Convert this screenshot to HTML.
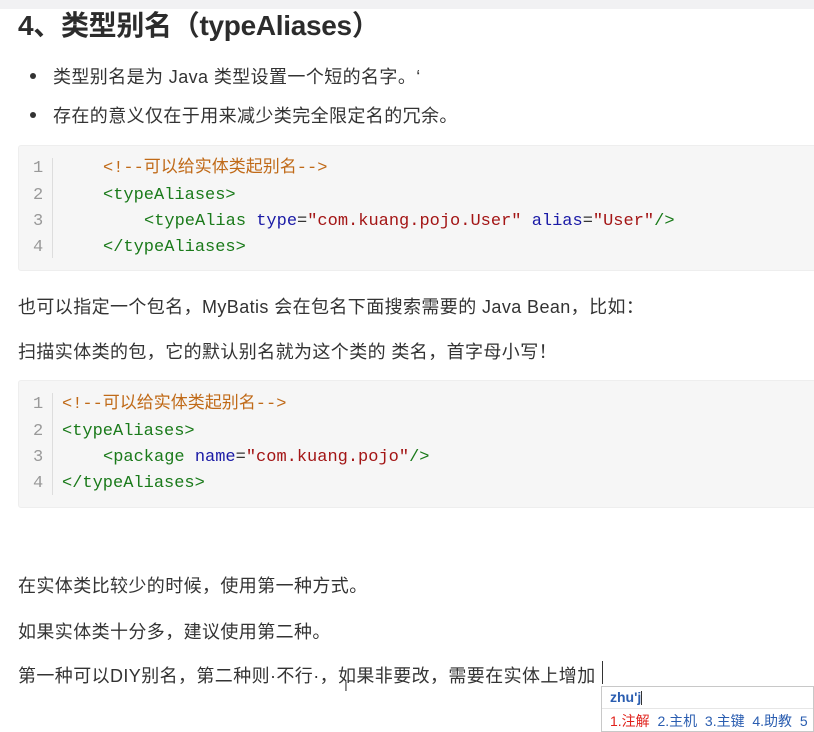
<!DOCTYPE html>
<html><head><meta charset="utf-8"><style>
*{margin:0;padding:0;box-sizing:border-box}
body{width:814px;height:732px;background:#fff;position:relative;overflow:hidden;font-family:"Liberation Sans","Noto Sans CJK SC",sans-serif;color:#333}
.top{position:absolute;left:0;top:0;width:814px;height:9px;background:#f1f1f3}
.abs{position:absolute;white-space:nowrap}
h1{position:absolute;left:18px;top:4px;font-size:28px;font-weight:bold;color:#2c2c2c;white-space:nowrap;letter-spacing:-0.3px}
.p{font-size:18px;letter-spacing:0.4px;color:#333}
.dot{position:absolute;width:6px;height:6px;border-radius:3px;background:#333}
.code{position:absolute;left:18px;width:800px;background:#f6f6f6;border:1px solid #eee;border-radius:3px}
.code .g{position:absolute;left:33px;top:12px;bottom:12px;width:1px;background:#ddd}
.ln{position:absolute;left:14px;font-family:"Liberation Mono",monospace;font-size:17px;line-height:20px;color:#999}
.cl{position:absolute;font-family:"Liberation Mono","Noto Sans CJK SC",monospace;font-size:17px;line-height:20px;white-space:pre;color:#1a7a1a}
.c{color:#c06a18}.a{color:#1a1aa6}.s{color:#a31515}.k{color:#333}
.ime{position:absolute;left:601px;top:686px;width:213px;height:46px;border:1px solid #c8c8c8;background:#fff;font-size:14px}
</style></head><body>
<div class="top"></div>
<h1>4、类型别名（typeAliases）</h1>
<div class="dot" style="left:30px;top:73px"></div>
<div class="abs p" style="left:53px;top:63px">类型别名是为 Java 类型设置一个短的名字。‘</div>
<div class="dot" style="left:30px;top:112px"></div>
<div class="abs p" style="left:53px;top:102px">存在的意义仅在于用来减少类完全限定名的冗余。</div>

<div class="code" style="top:145px;height:126px">
<div class="g"></div>
<div class="ln" style="top:13px">1</div><div class="ln" style="top:40px">2</div><div class="ln" style="top:66px">3</div><div class="ln" style="top:92px">4</div>
<div class="cl c" style="left:84px;top:13px">&lt;!--可以给实体类起别名--&gt;</div>
<div class="cl" style="left:84px;top:40px">&lt;typeAliases&gt;</div>
<div class="cl" style="left:125px;top:66px">&lt;typeAlias <span class="a">type</span><span class="k">=</span><span class="s">"com.kuang.pojo.User"</span> <span class="a">alias</span><span class="k">=</span><span class="s">"User"</span>/&gt;</div>
<div class="cl" style="left:84px;top:92px">&lt;/typeAliases&gt;</div>
</div>

<div class="abs p" style="left:18px;top:293px">也可以指定一个包名，MyBatis 会在包名下面搜索需要的 Java Bean，比如：</div>
<div class="abs p" style="left:18px;top:338px">扫描实体类的包，它的默认别名就为这个类的 类名，首字母小写！</div>

<div class="code" style="top:380px;height:128px">
<div class="g"></div>
<div class="ln" style="top:14px">1</div><div class="ln" style="top:41px">2</div><div class="ln" style="top:67px">3</div><div class="ln" style="top:93px">4</div>
<div class="cl c" style="left:43px;top:14px">&lt;!--可以给实体类起别名--&gt;</div>
<div class="cl" style="left:43px;top:41px">&lt;typeAliases&gt;</div>
<div class="cl" style="left:84px;top:67px">&lt;package <span class="a">name</span><span class="k">=</span><span class="s">"com.kuang.pojo"</span>/&gt;</div>
<div class="cl" style="left:43px;top:93px">&lt;/typeAliases&gt;</div>
</div>

<div class="abs p" style="left:18px;top:572px">在实体类比较少的时候，使用第一种方式。</div>
<div class="abs p" style="left:18px;top:618px">如果实体类十分多，建议使用第二种。</div>
<div class="abs p" style="left:18px;top:662px">第一种可以DIY别名，第二种则·不行·，如果非要改，需要在实体上增加</div>
<div class="abs" style="left:602px;top:661px;width:1px;height:23px;background:#333"></div>
<div class="abs" style="left:344px;top:678px;font-size:14px;color:#555">I</div>
<div class="ime">
<div style="position:absolute;left:8px;top:2px;color:#2a5db0;font-weight:bold;font-size:14px">zhu'j<span style="display:inline-block;width:1px;height:14px;background:#333;vertical-align:middle"></span></div>
<div style="position:absolute;left:0;top:21px;width:100%;height:1px;background:#e6e6e6"></div>
<div style="position:absolute;left:8px;top:24px;white-space:nowrap;color:#2a5db0"><span style="color:#e0201a">1.注解</span>&nbsp; 2.主机&nbsp; 3.主键&nbsp; 4.助教&nbsp; 5</div>
</div>
</body></html>
